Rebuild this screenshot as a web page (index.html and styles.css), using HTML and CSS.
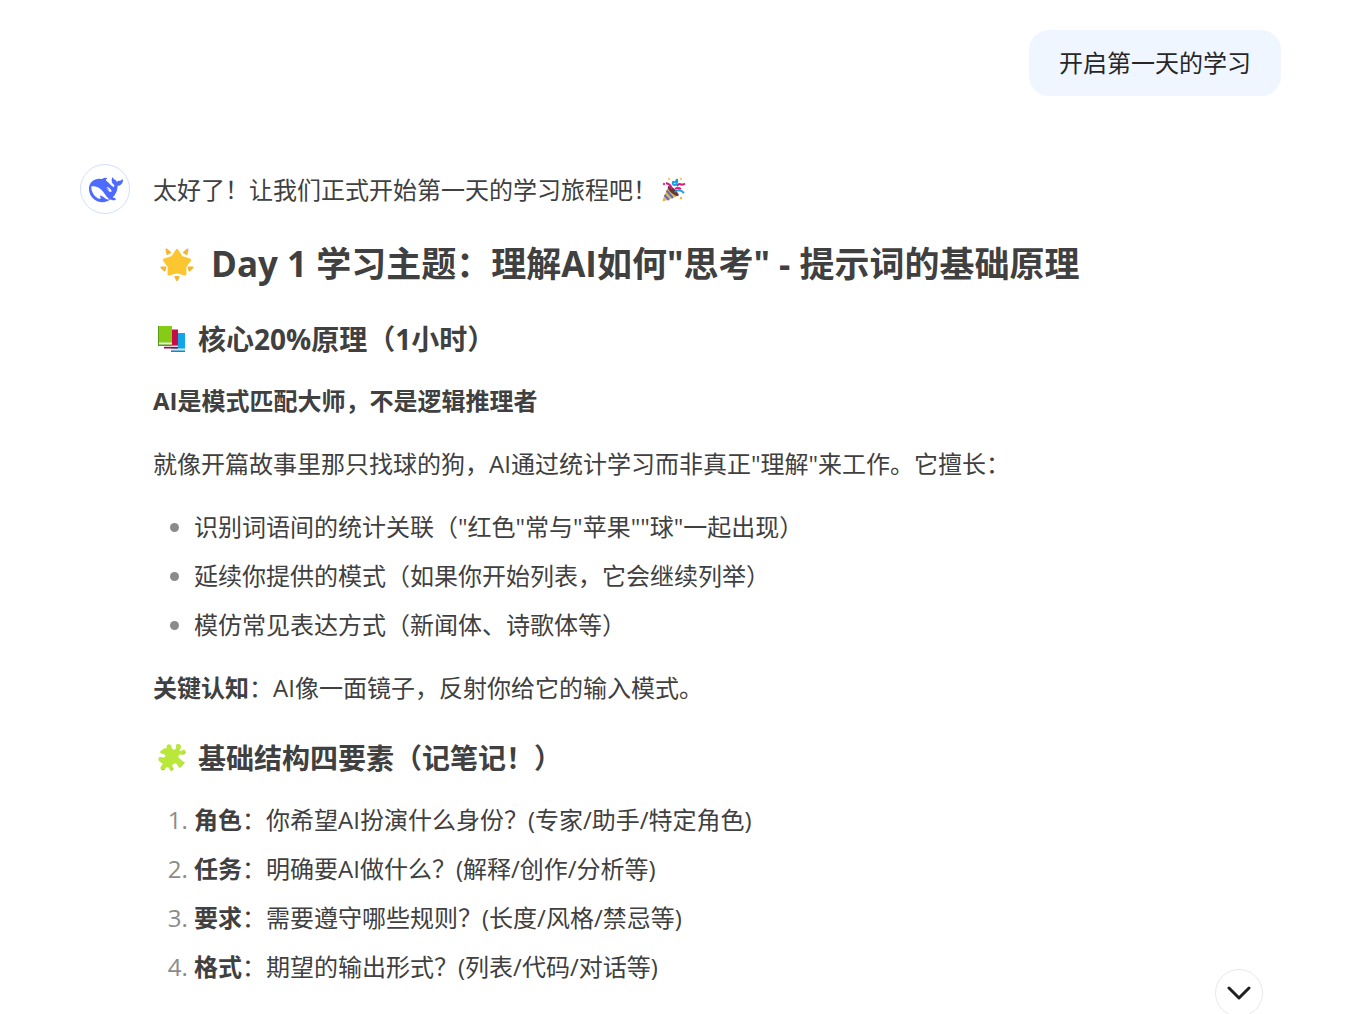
FILE: index.html
```html
<!DOCTYPE html>
<html lang="zh-CN">
<head>
<meta charset="utf-8">
<meta name="viewport" content="width=device-width, initial-scale=1">
<title>Day 1 学习</title>
<link rel="stylesheet" href="styles.css">
</head>
<body>
<main class="chat">
  <div class="user-row"><p class="bubble">开启第一天的学习</p></div>

  <article class="reply">
    <div class="avatar">
      <svg class="whale" viewBox="0 0 24 24" aria-hidden="true"><path d="M23.748 4.482c-.254-.124-.364.113-.512.234-.051.039-.094.09-.137.136-.372.397-.806.657-1.373.626-.829-.046-1.537.214-2.163.848-.133-.782-.575-1.248-1.247-1.548-.352-.156-.708-.311-.955-.65-.172-.241-.219-.51-.305-.774-.055-.16-.11-.323-.293-.35-.2-.031-.278.136-.356.276-.313.572-.434 1.202-.422 1.84.027 1.436.633 2.58 1.838 3.393.137.093.172.187.129.323-.082.28-.18.552-.266.833-.055.179-.137.217-.329.14a5.526 5.526 0 01-1.736-1.18c-.857-.828-1.631-1.742-2.597-2.458a11.365 11.365 0 00-.689-.471c-.985-.957.13-1.743.388-1.836.27-.098.093-.432-.779-.428-.872.004-1.67.295-2.687.684a3.055 3.055 0 01-.465.137 9.597 9.597 0 00-2.883-.102c-1.885.21-3.39 1.102-4.497 2.623C.082 8.606-.231 10.684.152 12.85c.403 2.284 1.569 4.175 3.36 5.653 1.858 1.533 3.997 2.284 6.438 2.14 1.482-.085 3.133-.284 4.994-1.86.47.234.962.327 1.78.397.63.059 1.236-.03 1.705-.128.735-.156.684-.837.419-.961-2.155-1.004-1.682-.595-2.113-.926 1.096-1.296 2.746-2.642 3.392-7.003.05-.347.007-.565 0-.845-.004-.17.035-.237.23-.256a4.173 4.173 0 001.545-.475c1.396-.763 1.96-2.015 2.093-3.517.02-.23-.004-.467-.247-.588zM11.581 18c-2.089-1.642-3.102-2.183-3.52-2.16-.392.024-.321.471-.235.763.09.288.207.486.371.739.114.167.192.416-.113.603-.673.416-1.842-.14-1.897-.167-1.361-.802-2.5-1.86-3.301-3.307-.774-1.393-1.224-2.887-1.298-4.482-.02-.386.093-.522.477-.592a4.696 4.696 0 011.529-.039c2.132.312 3.946 1.265 5.468 2.774.868.86 1.525 1.887 2.202 2.891.72 1.066 1.494 2.082 2.48 2.914.348.292.625.514.891.677-.802.09-2.14.11-3.054-.614zm1-6.44a.306.306 0 01.415-.287.302.302 0 01.2.288.306.306 0 01-.31.307.303.303 0 01-.304-.308zm3.11 1.596c-.2.081-.399.151-.59.16a1.245 1.245 0 01-.798-.254c-.274-.23-.47-.358-.552-.758a1.73 1.73 0 01.016-.588c.07-.327-.008-.537-.239-.727-.187-.156-.426-.199-.688-.199a.559.559 0 01-.254-.078c-.11-.054-.2-.19-.114-.358.028-.054.16-.186.192-.21.356-.202.767-.136 1.146.016.352.144.618.408 1.001.782.391.451.462.576.685.914.176.265.336.537.445.848.067.195-.019.354-.25.452z"/></svg>
    </div>

    <div class="content">
      <p class="line">太好了！让我们正式开始第一天的学习旅程吧！<svg class="party" viewBox="0 0 26 26" aria-hidden="true">
        <path d="M7 10 1.500 23Q1.500 25 3.500 24L17 19Q15 11 7 10Z" fill="#e8b552"/>
        <path d="M5.500 13.500 12 21M3.500 18 8 23" stroke="#5a6fc4" stroke-width="2"/>
        <path d="M7 9Q13 9 18 18Q16 20.500 12 17Q6 13 7 9Z" fill="#5b3a37"/>
        <path d="M5 6q6 2 5.500 6M16 9q2-3 4-1.500 2 .5 4-1" fill="none" stroke="#dc1683" stroke-width="2"/>
        <path d="M16 2q-1 4-4 3-1 3 2 3 3-1 2-6M14 15q4-4 9 1" fill="none" stroke="#1c9fe0" stroke-width="2"/>
        <path d="M14 12q3-2 6 0" fill="none" stroke="#dc1683" stroke-width="2"/>
        <circle cx="3" cy="7" r="1.200" fill="#d83b7b"/><circle cx="20" cy="2" r="1" fill="#f3b72e"/><circle cx="20" cy="21" r="1.200" fill="#f3b72e"/><circle cx="8" cy="2" r="1" fill="#f3b72e"/>
      </svg></p>

      <h2 class="title"><svg class="star" viewBox="0 0 34 34" aria-hidden="true">
        <g stroke-linejoin="round" stroke-width="3">
          <path d="M17 3.500 21.500 10.500 29.500 13 24.800 19.500 25 27 17 24.800 9 27 9.200 19.500 4.500 13 12.500 10.500Z" fill="#fcc631" stroke="#fcc631"/>
        </g>
        <path d="M6.500 2.500 10 5.500 7.500 7ZM27.500 2.500 24 5.500 26.500 7ZM1.500 20.500 5.500 20.500 4.500 23.500ZM32.500 20.500 28.500 20.500 29.500 23.500ZM15.500 30H18.500L17 33Z" fill="#f2b632" stroke="#f2b632" stroke-width="2" stroke-linejoin="round"/>
      </svg>Day 1 学习主题：理解AI如何"思考" - 提示词的基础原理</h2>

      <h3 class="section"><svg class="icon" viewBox="0 0 30 30" aria-hidden="true">
        <path d="M14 9H28V27H14Z" fill="#10a6ea"/><path d="M14 24.500H28V27H14Z" fill="#cdeafb"/><path d="M14 26.500H28V28H14Z" fill="#1189c4"/>
        <path d="M7 5.500H21V23.500H7Z" fill="#c60b45"/><path d="M7 21.500H21V23.500H7Z" fill="#ecd2dc"/><path d="M7 23H21V24.500H7Z" fill="#9f0838"/>
        <path d="M1 2H15V20H1Z" fill="#86cc16"/><path d="M1 18.500H15V21H1Z" fill="#e4efd4"/><path d="M1 20.500H15V22H1ZM1 2H2V22H1Z" fill="#599b12"/>
      </svg>核心20%原理（1小时）</h3>

      <p class="line"><strong>AI是模式匹配大师，不是逻辑推理者</strong></p>
      <p class="line">就像开篇故事里那只找球的狗，AI通过统计学习而非真正"理解"来工作。它擅长：</p>

      <ul class="list">
        <li>识别词语间的统计关联（"红色"常与"苹果""球"一起出现）</li>
        <li>延续你提供的模式（如果你开始列表，它会继续列举）</li>
        <li>模仿常见表达方式（新闻体、诗歌体等）</li>
      </ul>

      <p class="line"><strong>关键认知</strong>：AI像一面镜子，反射你给它的输入模式。</p>

      <h3 class="section"><svg class="icon" viewBox="0 0 30 30" aria-hidden="true">
        <path d="M10 5C8 1 14 0 14.500 3.500C14.600 6 16.500 8 18.500 6C20 4.500 17.500 2.500 20 1.300C23 0 25 3 23.500 5.500L22.500 8C24 9 27 5 28.500 8C29.500 11 26 12.500 24 11.500C22 11 20.500 13 22 15L27.500 19.500L23 24.500C21 25 21 21 18.500 20.500C15.500 20 14.500 22.500 16 24.500C18 27.500 14 29 12.500 26.500C12 24 10 23 8.500 25C7.500 28 3 28 3.500 24.500C4 22 6 22 5.500 20.500C4 19 1 18.500 1.500 15.500C2.500 12.500 5.500 15.500 8 14C9.500 12 7 10.500 5 11L2.500 9L7 5.500Z" fill="#b9e83b"/>
        <path d="M27.500 19.500 23 24.500M16 25 14 27.500M8 26 5 27M28.500 9 26 11.500" fill="none" stroke="#a3cf3a" stroke-width="1"/>
      </svg>基础结构四要素（记笔记！）</h3>

      <ol class="list">
        <li><strong>角色</strong>：你希望AI扮演什么身份？(专家/助手/特定角色)</li>
        <li><strong>任务</strong>：明确要AI做什么？(解释/创作/分析等)</li>
        <li><strong>要求</strong>：需要遵守哪些规则？(长度/风格/禁忌等)</li>
        <li><strong>格式</strong>：期望的输出形式？(列表/代码/对话等)</li>
      </ol>
    </div>
  </article>
</main>

<button class="scroll-down" type="button" aria-label="滚动到底部">
  <svg class="chevron" viewBox="0 0 24 24" aria-hidden="true"><path d="M2 7 12 17 22 7"/></svg>
</button>
</body>
</html>
```
FILE: styles.css
```css
* {
  box-sizing: border-box;
}

body {
  margin: 0;
  background: #fff;
  color: #404040;
  font-family: "Open Sans", "Noto Sans CJK SC", sans-serif;
  font-size: 24px;
  line-height: 42px;
}

.chat {
  padding: 30px 84px 24px 80px;
}

.user-row {
  display: flex;
  justify-content: flex-end;
}

.bubble {
  margin: 0;
  padding: 12px 30px;
  border-radius: 20px;
  background: #eff6ff;
  color: #262626;
}

.reply {
  display: grid;
  grid-template-columns: 50px 1fr;
  column-gap: 23px;
  margin-top: 68px;
}

.avatar {
  display: grid;
  place-items: center;
  width: 50px;
  height: 50px;
  padding: 2px 0 0 2px;
  border: 1px solid #d5defc;
  border-radius: 50%;
}

.whale {
  width: 34px;
  height: 34px;
  fill: #4d6bfe;
}

.content {
  padding-top: 5px;
}

.line {
  margin: 0 0 21px;
}

.party {
  width: 26px;
  height: 26px;
  margin-left: 4px;
  vertical-align: -4px;
}

.title,
.section {
  display: flex;
  align-items: center;
  font-weight: 700;
}

.title {
  gap: 17px;
  margin: 28px 0;
  padding-left: 7px;
  font-size: 35px;
  line-height: 50px;
}

.star {
  flex: none;
  width: 34px;
  height: 34px;
}

.section {
  gap: 11px;
  margin: 27px 0 19px;
  padding-left: 4px;
  font-size: 28px;
  line-height: 44px;
}

.icon {
  flex: none;
  width: 30px;
  height: 30px;
}

.list {
  margin: 0 0 21px;
  padding-left: 41px;
}

.list li + li {
  margin-top: 7px;
}

.list li::marker {
  color: #8b8b8b;
}

.scroll-down {
  position: fixed;
  right: 102px;
  bottom: -3px;
  display: grid;
  place-items: center;
  width: 48px;
  height: 48px;
  padding: 0;
  border: 1px solid #e8e8e8;
  border-radius: 50%;
  background: #fff;
}

.chevron {
  width: 24px;
  height: 24px;
  fill: none;
  stroke: #202020;
  stroke-width: 3;
  stroke-linecap: round;
  stroke-linejoin: round;
}
```
